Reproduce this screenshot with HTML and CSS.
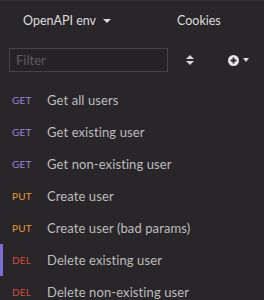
FILE: index.html
```html
<!DOCTYPE html>
<html>
<head>
<meta charset="utf-8">
<link rel="stylesheet" href="styles.css">
</head>
<body>
<div class="app">
  <header class="top">
    <div class="env">OpenAPI env <span class="caret"></span></div>
    <div class="cookies">Cookies</div>
  </header>
  <div class="filter-row">
    <div class="filter"><span class="ph">Filter</span></div>
    <div class="sort">
      <svg width="8" height="10" viewBox="0 0 8 10"><path d="M4 0 L8 4 H0 Z M0 6 H8 L4 10 Z" fill="#d8d8d8"/></svg>
    </div>
    <div class="add">
      <svg width="11" height="11" viewBox="0 0 11 11"><circle cx="5.5" cy="5.5" r="5.5" fill="#e6e6e6"/><path d="M5.5 2.6V8.4M2.6 5.5H8.4" stroke="#29262a" stroke-width="1.8"/></svg>
      <span class="caret small"></span>
    </div>
  </div>
  <ul class="list">
    <li class="item"><span class="m get">GET</span><span class="name">Get all users</span></li>
    <li class="item"><span class="m get">GET</span><span class="name">Get existing user</span></li>
    <li class="item"><span class="m get">GET</span><span class="name">Get non-existing user</span></li>
    <li class="item"><span class="m put">PUT</span><span class="name">Create user</span></li>
    <li class="item"><span class="m put">PUT</span><span class="name">Create user (bad params)</span></li>
    <li class="item active"><span class="m del">DEL</span><span class="name">Delete existing user</span></li>
    <li class="item"><span class="m del">DEL</span><span class="name">Delete non-existing user</span></li>
  </ul>
</div>
</body>
</html>
```
FILE: styles.css
```css
* { box-sizing: border-box; }
html, body { margin: 0; padding: 0; background: #29262a; }
body { font-family: "Lato", "Open Sans", sans-serif; color: #bdbdbd; width: 264px; height: 300px; overflow: hidden; }
.app { display: flex; flex-direction: column; }
.top { height: 40px; display: flex; align-items: center; font-size: 12.5px; color: #dcdcdc; border-top: 1px solid #353236; padding-bottom: 1px; }
.env { width: 177px; padding-left: 23px; display: flex; align-items: center; gap: 7px; }
.caret { display: inline-block; width: 0; height: 0; border-left: 4px solid transparent; border-right: 4px solid transparent; border-top: 4px solid #dcdcdc; margin-top: 2px; }
.caret.small { border-left-width: 3.5px; border-right-width: 3.5px; border-top-width: 4px; margin-top: 0; }
.filter-row { height: 40px; display: flex; align-items: center; padding-left: 9px; }
.filter { width: 159px; height: 24px; border: 1px solid #464347; background: #262327; display: flex; align-items: center; padding-left: 6px; font-size: 13px; }
.ph { color: #5e5b5f; }
.sort { width: 8px; margin-left: 18px; display: flex; }
.add { margin-left: 34px; display: flex; align-items: center; gap: 4px; }
.list { list-style: none; margin: 4px 0 0; padding: 0; }
.item { height: 32px; display: flex; align-items: center; padding-left: 9px; border-left: 3px solid transparent; }
.item.active { border-left-color: #7d6fd6; }
.m { width: 35px; font-size: 10px; letter-spacing: 0.2px; }
.get { color: #8f87dc; }
.put { color: #e59d35; }
.del { color: #d84d3b; }
.name { font-size: 13px; color: #bdbdbd; letter-spacing: 0.1px; }
```
